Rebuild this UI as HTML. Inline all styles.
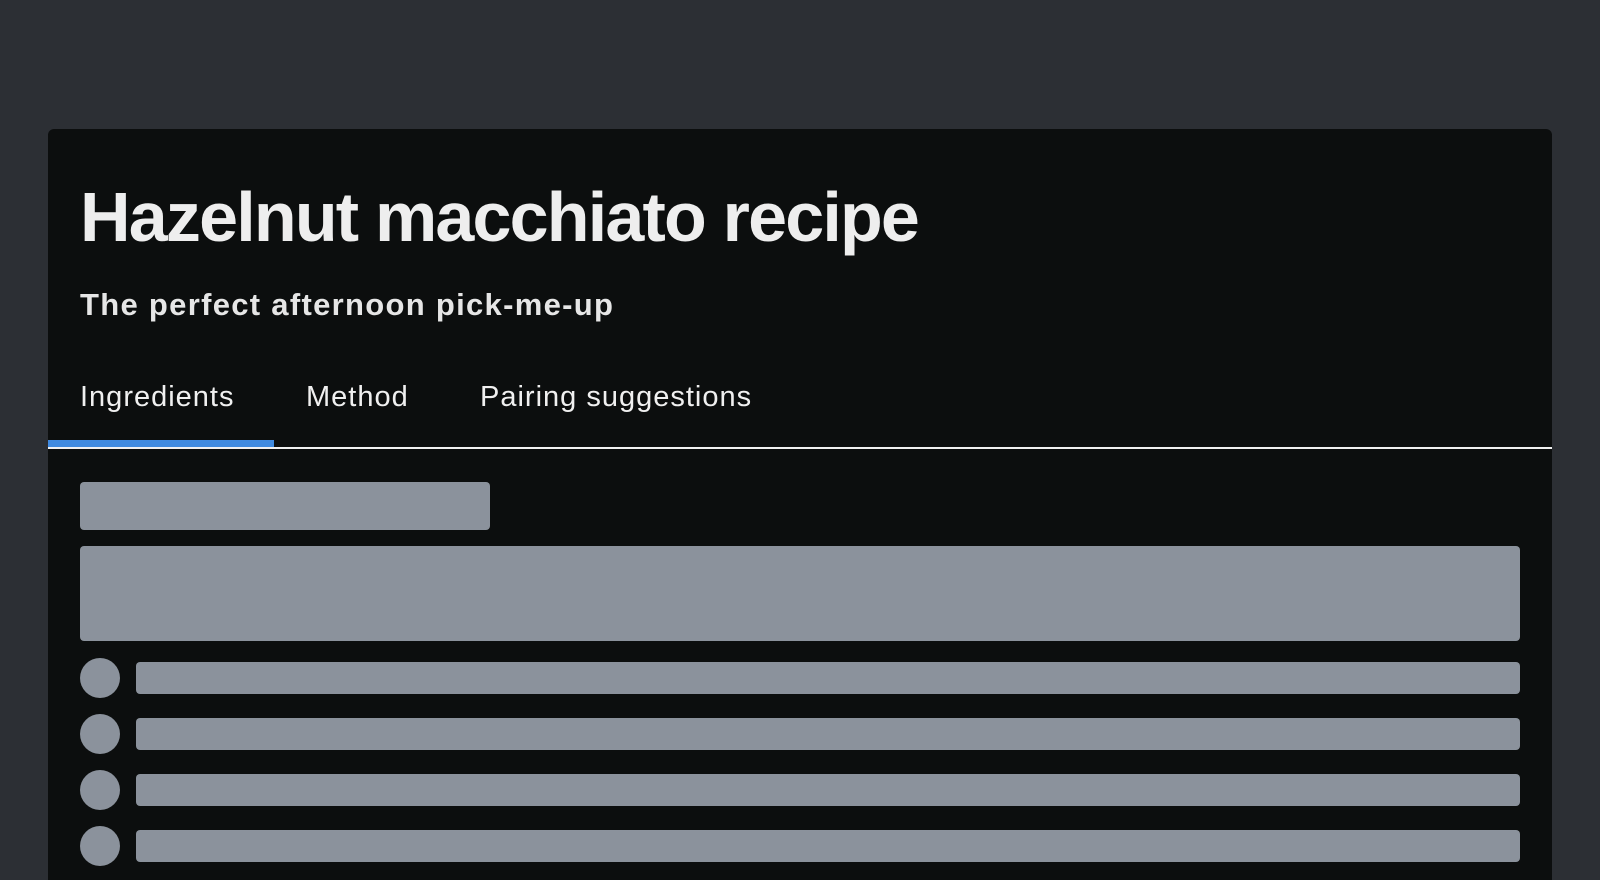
<!DOCTYPE html>
<html><head><style>
html,body{margin:0;padding:0;width:1600px;height:880px;overflow:hidden;background:#2c2f34;font-family:"Liberation Sans",sans-serif;}
.card{position:absolute;left:48px;top:129px;width:1504px;height:751px;background:#0c0e0e;border-radius:6px 6px 0 0;overflow:hidden;}
h1{position:absolute;left:32px;top:48px;margin:0;font-size:70px;font-weight:bold;color:#eeeeee;letter-spacing:-1.8px;}
.sub{position:absolute;left:32px;top:158px;font-size:31px;font-weight:bold;color:#e6e6e6;letter-spacing:1.3px;}
.tab{position:absolute;top:252px;font-size:29px;color:#f0f0f0;letter-spacing:1px;}
.line{position:absolute;left:0;top:318px;width:1504px;height:2px;background:#f0f0f0;}
.blue{position:absolute;left:0;top:311px;width:226px;height:7px;background:#3f8ae0;}
.sk{position:absolute;background:#8b929c;border-radius:4px;}
.c{position:absolute;background:#8b929c;border-radius:50%;width:40px;height:40px;left:32px;}
</style></head><body>
<div class="card">
<h1>Hazelnut macchiato recipe</h1>
<div class="sub">The perfect afternoon pick-me-up</div>
<div class="tab" style="left:32px">Ingredients</div>
<div class="tab" style="left:258px">Method</div>
<div class="tab" style="left:432px">Pairing suggestions</div>
<div class="blue"></div>
<div class="line"></div>
<div class="sk" style="left:32px;top:353px;width:410px;height:48px"></div>
<div class="sk" style="left:32px;top:417px;width:1440px;height:95px"></div>
<div class="c" style="top:529px"></div><div class="sk" style="left:88px;top:533px;width:1384px;height:32px"></div>
<div class="c" style="top:585px"></div><div class="sk" style="left:88px;top:589px;width:1384px;height:32px"></div>
<div class="c" style="top:641px"></div><div class="sk" style="left:88px;top:645px;width:1384px;height:32px"></div>
<div class="c" style="top:697px"></div><div class="sk" style="left:88px;top:701px;width:1384px;height:32px"></div>
</div>
</body></html>
